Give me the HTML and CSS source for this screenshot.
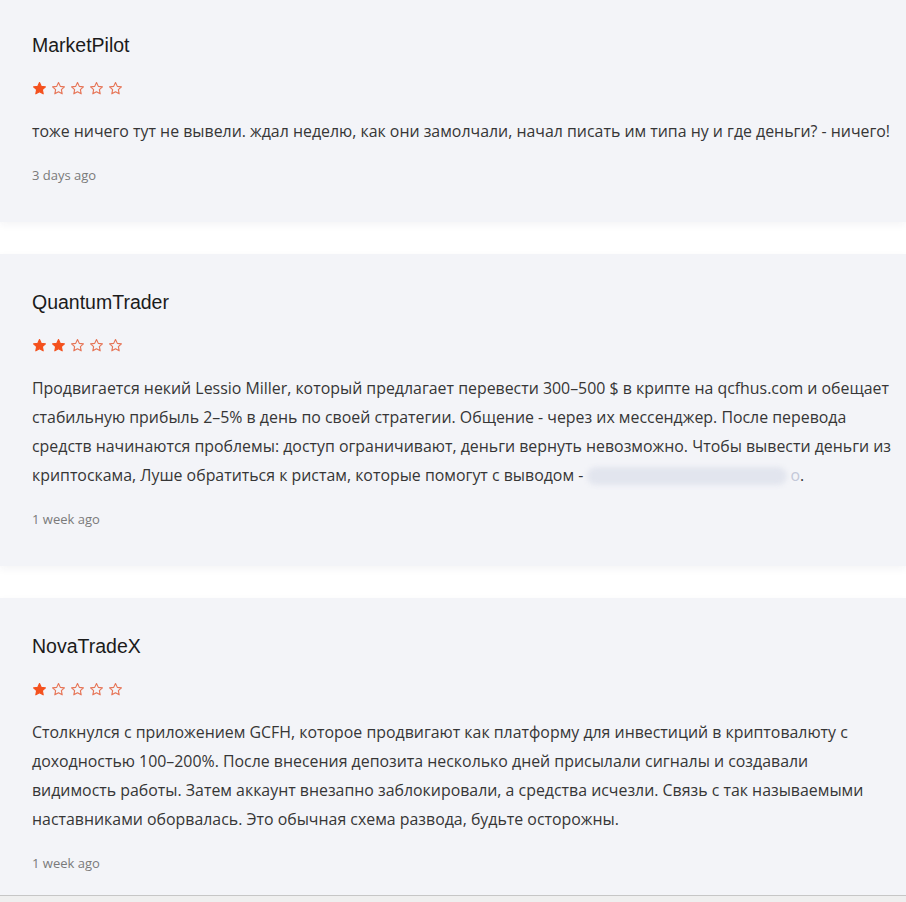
FILE: index.html
```html
<!DOCTYPE html>
<html lang="ru">
<head>
<meta charset="utf-8">
<title>Reviews</title>
<link rel="stylesheet" href="styles.css">
</head>
<body>
<svg width="0" height="0" class="defs">
  <defs>
    <polygon id="star" points="12,2.5 14.9,8.6 21.5,9.4 16.6,13.9 17.9,20.5 12,17.2 6.1,20.5 7.4,13.9 2.5,9.4 9.1,8.6"/>
  </defs>
</svg>
<main class="reviews">
  <article class="review">
    <h3 class="name">MarketPilot</h3>
    <div class="stars">
      <svg class="star full" viewBox="0 0 24 24"><use href="#star"/></svg>
      <svg class="star" viewBox="0 0 24 24"><use href="#star"/></svg>
      <svg class="star" viewBox="0 0 24 24"><use href="#star"/></svg>
      <svg class="star" viewBox="0 0 24 24"><use href="#star"/></svg>
      <svg class="star" viewBox="0 0 24 24"><use href="#star"/></svg>
    </div>
    <p class="text">тоже ничего тут не вывели. ждал неделю, как они замолчали, начал писать им типа ну и где деньги? - ничего!</p>
    <div class="time">3 days ago</div>
  </article>

  <article class="review">
    <h3 class="name">QuantumTrader</h3>
    <div class="stars">
      <svg class="star full" viewBox="0 0 24 24"><use href="#star"/></svg>
      <svg class="star full" viewBox="0 0 24 24"><use href="#star"/></svg>
      <svg class="star" viewBox="0 0 24 24"><use href="#star"/></svg>
      <svg class="star" viewBox="0 0 24 24"><use href="#star"/></svg>
      <svg class="star" viewBox="0 0 24 24"><use href="#star"/></svg>
    </div>
    <p class="text">Продвигается некий Lessio Miller, который предлагает перевести 300–500 $ в крипте на qcfhus.com и обещает стабильную прибыль 2–5% в день по своей стратегии. Общение - через их мессенджер. После перевода средств начинаются проблемы: доступ ограничивают, деньги вернуть невозможно. Чтобы вывести деньги из криптоскама, Луше обратиться к ристам, которые помогут с выводом - <span class="blurred"></span><span class="faint">о</span>.</p>
    <div class="time">1 week ago</div>
  </article>

  <article class="review">
    <h3 class="name">NovaTradeX</h3>
    <div class="stars">
      <svg class="star full" viewBox="0 0 24 24"><use href="#star"/></svg>
      <svg class="star" viewBox="0 0 24 24"><use href="#star"/></svg>
      <svg class="star" viewBox="0 0 24 24"><use href="#star"/></svg>
      <svg class="star" viewBox="0 0 24 24"><use href="#star"/></svg>
      <svg class="star" viewBox="0 0 24 24"><use href="#star"/></svg>
    </div>
    <p class="text">Столкнулся с приложением GCFH, которое продвигают как платформу для инвестиций в криптовалюту с доходностью 100–200%. После внесения депозита несколько дней присылали сигналы и создавали видимость работы. Затем аккаунт внезапно заблокировали, а средства исчезли. Связь с так называемыми наставниками оборвалась. Это обычная схема развода, будьте осторожны.</p>
    <div class="time">1 week ago</div>
  </article>
</main>
<div class="bottom-bar"></div>
</body>
</html>
```

FILE: styles.css
```css
html, body {
  margin: 0;
  padding: 0;
  background: #ffffff;
}

.defs {
  position: absolute;
  width: 0;
  height: 0;
  overflow: hidden;
}

.reviews {
  display: flex;
  flex-direction: column;
  gap: 32px;
  margin-top: -3px;
}

.review {
  background: #f3f4f8;
  padding: 36px 13px 37px 32px;
  box-shadow: 0 3px 8px rgba(30, 40, 80, 0.05);
}

.name {
  margin: 0;
  font-family: "Liberation Sans", Arial, sans-serif;
  font-weight: 400;
  font-size: 19.5px;
  line-height: 24px;
  color: #1b1b1b;
}

.stars {
  display: flex;
  gap: 4px;
  margin-top: 23px;
  height: 16px;
  align-items: center;
}

.star {
  width: 15px;
  height: 15px;
  fill: none;
  stroke: #e67456;
  stroke-width: 1.8;
  stroke-linejoin: round;
}

.star.full {
  fill: #f4511e;
  stroke: #f4511e;
}

.text {
  margin: 21px 0 0;
  font-family: "Open Sans", sans-serif;
  font-size: 15.9px;
  line-height: 29px;
  color: #363636;
}

.blurred {
  display: inline-block;
  vertical-align: -4px;
  width: 200px;
  height: 18px;
  border-radius: 9px;
  background: #e2e5ee;
  filter: blur(2.5px);
}

.faint {
  margin-left: 3px;
  color: #c3c8d8;
}

.time {
  margin-top: 19px;
  font-family: "Open Sans", sans-serif;
  font-size: 13px;
  line-height: 20px;
  color: #7a7a7a;
}

.bottom-bar {
  position: fixed;
  left: 0;
  right: 0;
  bottom: 0;
  height: 6px;
  background: #efefef;
  border-top: 1px solid #c6c6c6;
}
```
